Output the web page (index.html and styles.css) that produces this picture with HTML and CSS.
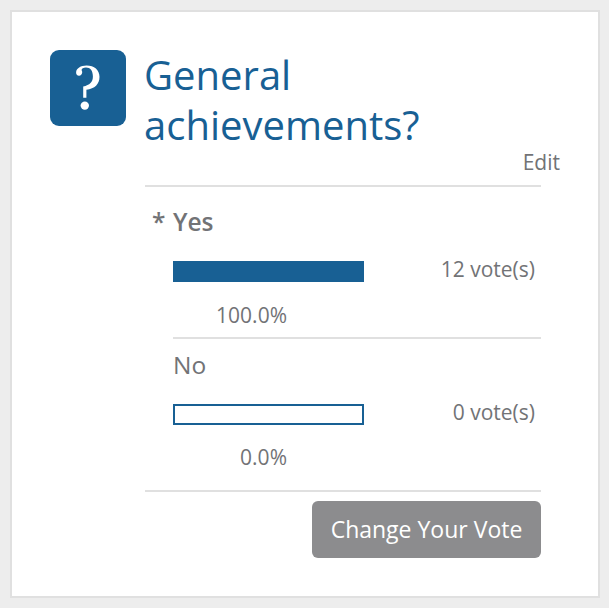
FILE: index.html
```
<!DOCTYPE html>
<html lang="en">
<head>
    <meta charset="UTF-8">
    <meta name="viewport" content="width=device-width, initial-scale=1.0">
    <title>General achievements?</title>
    <link rel="stylesheet" href="styles.css">
</head>
<body>
    <div class="panel">
        <div class="poll-icon">
            <svg width="76" height="76" viewBox="0 0 76 76">
                <path d="M33.2 47.7 V36.6 C39.8 35.2 42.9 32 42.9 26.6 C42.9 20.8 40.3 17.6 36 17.6 C33.4 17.6 31.6 18.6 31.6 20 C31.6 20.8 32.4 21.2 32.2 22.6 C32 24.6 30.6 25.8 29 25.7 C27.1 25.6 26 24.2 26.1 22.2 C26.4 18.2 30.6 15.4 36.6 15.4 C44.2 15.4 49.5 19.8 49.5 26.8 C49.5 34.2 44.8 38.8 36.4 39.8 V47.7 Z" fill="#fff"/>
                <circle cx="34.8" cy="55.6" r="4.2" fill="#fff"/>
            </svg>
        </div>
        <div class="content">
            <h1>General achievements?</h1>
            <a class="edit">Edit</a>
            <div class="poll">
                <div class="option voted">
                    <div class="label"><span class="star">*</span>Yes</div>
                    <div class="result">
                        <div class="bar"><div class="fill" style="width: 100%"></div></div>
                        <div class="votes">12 vote(s)</div>
                    </div>
                    <div class="percent">100.0%</div>
                </div>
                <div class="option">
                    <div class="label">No</div>
                    <div class="result">
                        <div class="bar"><div class="fill" style="width: 0%"></div></div>
                        <div class="votes">0 vote(s)</div>
                    </div>
                    <div class="percent">0.0%</div>
                </div>
            </div>
            <button class="change">Change Your Vote</button>
        </div>
    </div>
</body>
</html>
```
FILE: styles.css
```
* {
    box-sizing: border-box;
}
body {
    margin: 0;
    padding: 10px;
    background-color: #ededed;
    font-family: "Open Sans", sans-serif;
    color: #727376;
}
.panel {
    display: flex;
    width: 590px;
    height: 588px;
    padding: 38px;
    background: #fff;
    border: 2px solid #e0e0e0;
}
.poll-icon {
    width: 76px;
    height: 76px;
    margin-right: 19px;
    flex: none;
    border-radius: 9px;
    background: #186094;
}
.content {
    display: flex;
    flex-direction: column;
    width: 415px;
    flex: none;
}
h1 {
    margin: 0 0 0 -1px;
    font-size: 40px;
    line-height: 50px;
    font-weight: normal;
    color: #186094;
}
.edit {
    align-self: flex-end;
    font-size: 21px;
    line-height: 24px;
}
.poll {
    width: 396px;
    margin-top: 11px;
    padding: 18px 0 0 28px;
    border-top: 2px solid #e0e0e0;
    border-bottom: 2px solid #e0e0e0;
}
.option {
    height: 151px;
    padding-top: 9px;
}
.voted {
    height: 134px;
    padding-top: 0;
    border-bottom: 2px solid #e0e0e0;
}
.label {
    height: 50px;
    font-size: 24.5px;
    line-height: 34px;
}
.voted .label {
    font-weight: 600;
}
.star {
    display: inline-block;
    width: 21px;
    margin-left: -21px;
}
.result {
    display: flex;
    justify-content: space-between;
    height: 34px;
    padding: 6px 6px 0 0;
}
.bar {
    width: 191px;
    height: 21px;
    border: 2px solid #186094;
}
.fill {
    height: 100%;
    background: #186094;
}
.votes {
    font-size: 21px;
    line-height: 16px;
}
.percent {
    width: 114px;
    padding-top: 10px;
    font-size: 21px;
    line-height: 32px;
    text-align: right;
}
.option:last-child .percent {
    padding-top: 9px;
}
.change {
    width: 229px;
    height: 57px;
    margin: 9px 0 0 167px;
    padding: 0 0 2px;
    border: none;
    border-radius: 6px;
    background: #8c8c8e;
    color: #fff;
    font-family: inherit;
    font-size: 23px;
}
```
